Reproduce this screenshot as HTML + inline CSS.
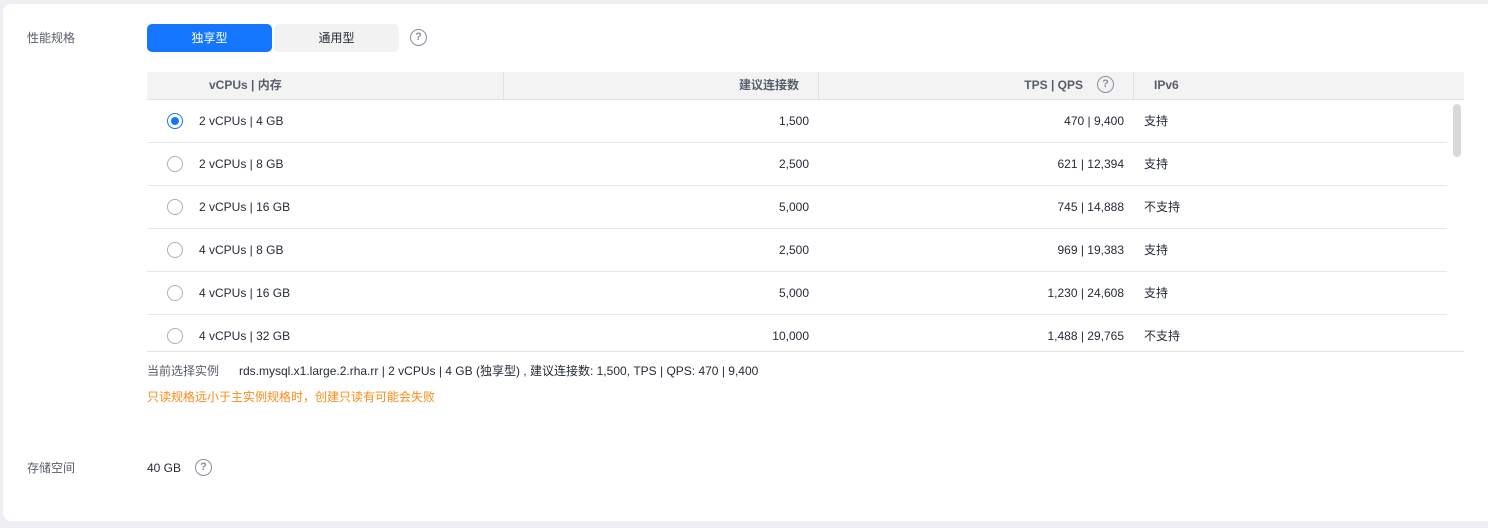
<!DOCTYPE html>
<html><head><meta charset="utf-8"><style>
*{margin:0;padding:0;box-sizing:border-box}
body{width:1488px;height:528px;background:#eeeff3;font-family:"Liberation Sans","Noto Sans CJK SC",sans-serif;font-size:12px;line-height:16px;color:#252b3a;position:relative;overflow:hidden}
.card{position:absolute;left:3px;top:4px;width:1495px;height:517px;background:#fff;border-radius:8px}
.a{position:absolute;white-space:nowrap;line-height:16px}
.lbl{color:#575d6c}
.q{position:absolute;width:17px;height:17px;border:1.5px solid #8a8e99;border-radius:50%;color:#8a8e99;font-size:11px;font-weight:bold;text-align:center;line-height:14px}
.hdr{position:absolute;left:147px;top:72px;width:1317px;height:28px;background:#f3f3f3;border-bottom:1px solid #e4e4e4}
.hdr .a{top:5px;font-weight:bold;color:#575d6c}
.div{position:absolute;top:0;width:1px;height:28px;background:#dfe1e6}
.row{position:absolute;left:147px;width:1300px;height:43px;border-bottom:1px solid #e8e8e8}
.row .a{top:13px}
.radio{position:absolute;left:20px;top:13px;width:16px;height:16px;border:1px solid #adb0b8;border-radius:50%}
.radio.on{border-color:#1476ff}
.radio.on::after{content:"";position:absolute;left:3px;top:3px;width:8px;height:8px;border-radius:50%;background:#1476ff}
</style></head><body>
<div class="card"></div>
<div class="a lbl" style="left:27px;top:30px">性能规格</div>
<div class="a" style="left:147px;top:24px;width:125px;height:28px;background:#1476ff;border-radius:5px;color:#fff;text-align:center;line-height:28px">独享型</div>
<div class="a" style="left:274px;top:24px;width:125px;height:28px;background:#f2f2f2;border-radius:5px;text-align:center;line-height:28px">通用型</div>
<div class="q" style="left:410px;top:29px">?</div>
<div class="hdr">
<div class="a" style="left:62px">vCPUs | 内存</div>
<div class="div" style="left:356px"></div>
<div class="a" style="right:665px">建议连接数</div>
<div class="div" style="left:671px"></div>
<div class="a" style="right:381px">TPS | QPS</div>
<div class="q" style="left:950px;top:4px">?</div>
<div class="div" style="left:986px"></div>
<div class="a" style="left:1007px">IPv6</div>
</div>
<div class="row" style="top:100px"><div class="radio on"></div><div class="a" style="left:52px">2 vCPUs | 4 GB</div><div class="a" style="right:638px">1,500</div><div class="a" style="right:323px">470 | 9,400</div><div class="a" style="left:997px">支持</div></div>
<div class="row" style="top:143px"><div class="radio"></div><div class="a" style="left:52px">2 vCPUs | 8 GB</div><div class="a" style="right:638px">2,500</div><div class="a" style="right:323px">621 | 12,394</div><div class="a" style="left:997px">支持</div></div>
<div class="row" style="top:186px"><div class="radio"></div><div class="a" style="left:52px">2 vCPUs | 16 GB</div><div class="a" style="right:638px">5,000</div><div class="a" style="right:323px">745 | 14,888</div><div class="a" style="left:997px">不支持</div></div>
<div class="row" style="top:229px"><div class="radio"></div><div class="a" style="left:52px">4 vCPUs | 8 GB</div><div class="a" style="right:638px">2,500</div><div class="a" style="right:323px">969 | 19,383</div><div class="a" style="left:997px">支持</div></div>
<div class="row" style="top:272px"><div class="radio"></div><div class="a" style="left:52px">4 vCPUs | 16 GB</div><div class="a" style="right:638px">5,000</div><div class="a" style="right:323px">1,230 | 24,608</div><div class="a" style="left:997px">支持</div></div>
<div class="row" style="top:315px;height:37px;border:0"><div class="radio"></div><div class="a" style="left:52px">4 vCPUs | 32 GB</div><div class="a" style="right:638px">10,000</div><div class="a" style="right:323px">1,488 | 29,765</div><div class="a" style="left:997px">不支持</div></div>
<div class="a" style="left:147px;top:351px;width:1317px;height:1px;background:#e4e4e4"></div>
<div class="a" style="left:1453px;top:104px;width:8px;height:53px;background:#d9d9d9;border-radius:4px"></div>
<div class="a lbl" style="left:147px;top:363px">当前选择实例</div>
<div class="a" style="left:239px;top:363px">rds.mysql.x1.large.2.rha.rr | 2 vCPUs | 4 GB (独享型) , 建议连接数: 1,500, TPS | QPS: 470 | 9,400</div>
<div class="a" style="left:147px;top:389px;color:#fa8c16">只读规格远小于主实例规格时，创建只读有可能会失败</div>
<div class="a lbl" style="left:27px;top:460px">存储空间</div>
<div class="a" style="left:147px;top:460px">40 GB</div>
<div class="q" style="left:195px;top:459px">?</div>
</body></html>
